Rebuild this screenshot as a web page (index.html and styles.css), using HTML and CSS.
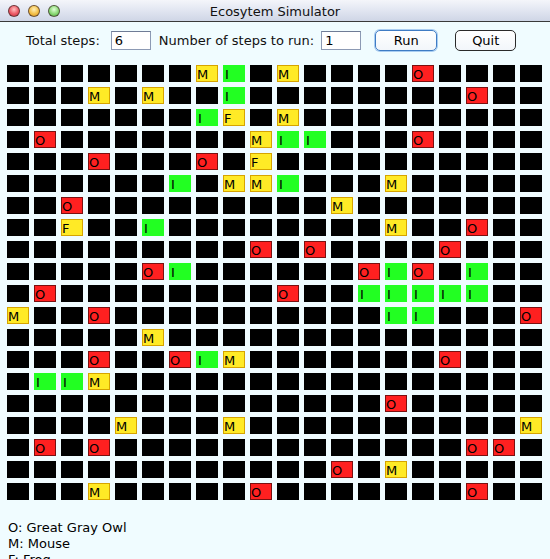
FILE: index.html
```html
<!DOCTYPE html>
<html>
<head>
<meta charset="utf-8">
<title>Ecosytem Simulator</title>
<link rel="stylesheet" href="styles.css">
</head>
<body>
<div class="window">
  <div class="titlebar">
    <div class="lights"><span class="light red"></span><span class="light yellow"></span><span class="light green"></span></div>
    <div class="title">Ecosytem Simulator</div>
    <div></div>
  </div>
  <div class="toolbar">
    <span class="lbl lbl-total">Total steps:</span>
    <span class="field field-total">6</span>
    <span class="lbl lbl-run">Number of steps to run:</span>
    <span class="field field-run">1</span>
    <span class="btn btn-run">Run</span>
    <span class="btn btn-quit">Quit</span>
  </div>
  <div class="grid">
    <div class="row"><span></span><span></span><span></span><span></span><span></span><span></span><span></span><span class="m">M</span><span class="i">I</span><span></span><span class="m">M</span><span></span><span></span><span></span><span></span><span class="o">O</span><span></span><span></span><span></span><span></span></div>
    <div class="row"><span></span><span></span><span></span><span class="m">M</span><span></span><span class="m">M</span><span></span><span></span><span class="i">I</span><span></span><span></span><span></span><span></span><span></span><span></span><span></span><span></span><span class="o">O</span><span></span><span></span></div>
    <div class="row"><span></span><span></span><span></span><span></span><span></span><span></span><span></span><span class="i">I</span><span class="m">F</span><span></span><span class="m">M</span><span></span><span></span><span></span><span></span><span></span><span></span><span></span><span></span><span></span></div>
    <div class="row"><span></span><span class="o">O</span><span></span><span></span><span></span><span></span><span></span><span></span><span></span><span class="m">M</span><span class="i">I</span><span class="i">I</span><span></span><span></span><span></span><span class="o">O</span><span></span><span></span><span></span><span></span></div>
    <div class="row"><span></span><span></span><span></span><span class="o">O</span><span></span><span></span><span></span><span class="o">O</span><span></span><span class="m">F</span><span></span><span></span><span></span><span></span><span></span><span></span><span></span><span></span><span></span><span></span></div>
    <div class="row"><span></span><span></span><span></span><span></span><span></span><span></span><span class="i">I</span><span></span><span class="m">M</span><span class="m">M</span><span class="i">I</span><span></span><span></span><span></span><span class="m">M</span><span></span><span></span><span></span><span></span><span></span></div>
    <div class="row"><span></span><span></span><span class="o">O</span><span></span><span></span><span></span><span></span><span></span><span></span><span></span><span></span><span></span><span class="m">M</span><span></span><span></span><span></span><span></span><span></span><span></span><span></span></div>
    <div class="row"><span></span><span></span><span class="m">F</span><span></span><span></span><span class="i">I</span><span></span><span></span><span></span><span></span><span></span><span></span><span></span><span></span><span class="m">M</span><span></span><span></span><span class="o">O</span><span></span><span></span></div>
    <div class="row"><span></span><span></span><span></span><span></span><span></span><span></span><span></span><span></span><span></span><span class="o">O</span><span></span><span class="o">O</span><span></span><span></span><span></span><span></span><span class="o">O</span><span></span><span></span><span></span></div>
    <div class="row"><span></span><span></span><span></span><span></span><span></span><span class="o">O</span><span class="i">I</span><span></span><span></span><span></span><span></span><span></span><span></span><span class="o">O</span><span class="i">I</span><span class="o">O</span><span></span><span class="i">I</span><span></span><span></span></div>
    <div class="row"><span></span><span class="o">O</span><span></span><span></span><span></span><span></span><span></span><span></span><span></span><span></span><span class="o">O</span><span></span><span></span><span class="i">I</span><span class="i">I</span><span class="i">I</span><span class="i">I</span><span class="i">I</span><span></span><span></span></div>
    <div class="row"><span class="m">M</span><span></span><span></span><span class="o">O</span><span></span><span></span><span></span><span></span><span></span><span></span><span></span><span></span><span></span><span></span><span class="i">I</span><span class="i">I</span><span></span><span></span><span></span><span class="o">O</span></div>
    <div class="row"><span></span><span></span><span></span><span></span><span></span><span class="m">M</span><span></span><span></span><span></span><span></span><span></span><span></span><span></span><span></span><span></span><span></span><span></span><span></span><span></span><span></span></div>
    <div class="row"><span></span><span></span><span></span><span class="o">O</span><span></span><span></span><span class="o">O</span><span class="i">I</span><span class="m">M</span><span></span><span></span><span></span><span></span><span></span><span></span><span></span><span class="o">O</span><span></span><span></span><span></span></div>
    <div class="row"><span></span><span class="i">I</span><span class="i">I</span><span class="m">M</span><span></span><span></span><span></span><span></span><span></span><span></span><span></span><span></span><span></span><span></span><span></span><span></span><span></span><span></span><span></span><span></span></div>
    <div class="row"><span></span><span></span><span></span><span></span><span></span><span></span><span></span><span></span><span></span><span></span><span></span><span></span><span></span><span></span><span class="o">O</span><span></span><span></span><span></span><span></span><span></span></div>
    <div class="row"><span></span><span></span><span></span><span></span><span class="m">M</span><span></span><span></span><span></span><span class="m">M</span><span></span><span></span><span></span><span></span><span></span><span></span><span></span><span></span><span></span><span></span><span class="m">M</span></div>
    <div class="row"><span></span><span class="o">O</span><span></span><span class="o">O</span><span></span><span></span><span></span><span></span><span></span><span></span><span></span><span></span><span></span><span></span><span></span><span></span><span></span><span class="o">O</span><span class="o">O</span><span></span></div>
    <div class="row"><span></span><span></span><span></span><span></span><span></span><span></span><span></span><span></span><span></span><span></span><span></span><span></span><span class="o">O</span><span></span><span class="m">M</span><span></span><span></span><span></span><span></span><span></span></div>
    <div class="row"><span></span><span></span><span></span><span class="m">M</span><span></span><span></span><span></span><span></span><span></span><span class="o">O</span><span></span><span></span><span></span><span></span><span></span><span></span><span></span><span class="o">O</span><span></span><span></span></div>
  </div>
  <div class="legend">
    <div>O: Great Gray Owl</div>
    <div>M: Mouse</div>
    <div>F: Frog</div>
    <div>I: Insect</div>
  </div>
</div>
</body>
</html>
```

FILE: styles.css
```css
html, body {
  margin: 0;
  padding: 0;
  overflow: hidden;
}
body {
  background: #f0fcff;
  font-family: "DejaVu Sans", "Liberation Sans", sans-serif;
  color: #000;
}
.window {
  width: 550px;
  height: 559px;
  overflow: hidden;
  background: #f0fcff;
}
.titlebar {
  height: 21px;
  border-bottom: 1px solid #3a3a3a;
  background: linear-gradient(to bottom, #f4f5fa 0%, #e3e7f2 45%, #cfd6e6 100%);
  display: grid;
  grid-template-columns: 1fr auto 1fr;
  align-items: center;
}
.lights {
  display: flex;
  gap: 8px;
  padding-left: 8px;
  padding-top: 1px;
}
.light {
  width: 12px;
  height: 12px;
  border-radius: 50%;
  box-sizing: border-box;
  border: 1px solid rgba(60, 40, 40, 0.7);
}
.red { background: radial-gradient(circle at 50% 35%, #ffc0c0 0%, #ec5a66 55%, #c8303e 100%); }
.yellow { background: radial-gradient(circle at 50% 35%, #fff0b8 0%, #f3bf48 55%, #d69420 100%); }
.green { background: radial-gradient(circle at 50% 35%, #e0ffd8 0%, #8ad874 55%, #4ea83c 100%); }
.title {
  font-size: 13px;
  color: #111;
  padding-top: 1px;
}
.toolbar {
  height: 43px;
  box-sizing: border-box;
  padding: 8px 0 0 26px;
  display: flex;
  align-items: flex-start;
  font-size: 13px;
}
.lbl {
  line-height: 21px;
  color: #111;
}
.lbl-total { margin-right: 11px; }
.lbl-run { margin-right: 7px; }
.field {
  margin-top: 1px;
  width: 40px;
  height: 19px;
  box-sizing: border-box;
  border: 1px solid #8c9ab4;
  border-top-color: #6f7c96;
  background: #fff;
  padding-left: 3px;
  line-height: 17px;
}
.field-total { margin-right: 8px; }
.field-run { margin-right: 14px; }
.btn {
  width: 62px;
  height: 21px;
  box-sizing: border-box;
  border-radius: 5px;
  text-align: center;
  line-height: 19px;
  background: linear-gradient(to bottom, #ffffff, #f2f6fa);
}
.btn-run {
  border: 1px solid #3f7cc4;
  box-shadow: 0 0 0 1px #a9cdf2;
  margin-right: 18px;
}
.btn-quit {
  width: 61px;
  border: 1px solid #2a2a2a;
}
.grid {
  padding-left: 7px;
  display: flex;
  flex-direction: column;
  gap: 5px;
}
.row {
  display: grid;
  grid-template-columns: repeat(20, 22px);
  column-gap: 5px;
}
.row span {
  height: 17px;
  box-sizing: border-box;
  background: #000;
  font-size: 13px;
  line-height: 17px;
  padding: 1px 0 0 1px;
  overflow: hidden;
}
.row .o {
  background: #ff2020;
  border: 1px solid #7a1010;
  padding: 0 0 0 0;
}
.row .m {
  background: #ffea26;
  border: 1px solid #d6a400;
  padding: 0 0 0 0;
}
.row .i {
  background: #22ff22;
  padding-left: 2px;
}
.legend {
  padding: 20px 0 0 8px;
  font-size: 13px;
  line-height: 16px;
}
```
